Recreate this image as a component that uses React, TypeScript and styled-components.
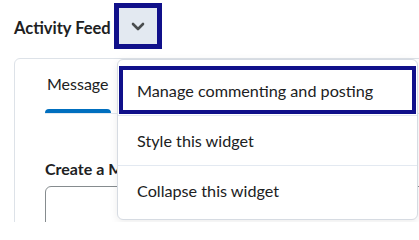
import React from "react";
import styled, { createGlobalStyle } from "styled-components";

const Global = createGlobalStyle`
  html, body { margin: 0; padding: 0; background: #ffffff; overflow: hidden; }
  body { font-family: Lato, "Noto Sans", sans-serif; color: #202122; }
`;

const Page = styled.div`
  position: relative;
  width: 419px;
  height: 222px;
  padding-left: 14px;
  box-sizing: border-box;
  overflow: hidden;
`;

const Header = styled.div`
  display: flex;
  align-items: center;
  height: 46px;
  padding-top: 3px;
`;

const Title = styled.h2`
  margin: 0;
  font-size: 16.5px;
  font-weight: 700;
  color: #202122;
  padding-top: 3px;
`;

const MenuButton = styled.button`
  display: flex;
  align-items: center;
  justify-content: center;
  width: 48px;
  height: 46px;
  margin-left: 3px;
  padding: 0;
  box-sizing: border-box;
  background: #e3e9f1;
  border: 5px solid #10108a;
  cursor: pointer;
`;

const Card = styled.div`
  margin-top: 9px;
  width: 460px;
  height: 200px;
  border: 1px solid #dde2e8;
  border-radius: 6px;
  box-sizing: border-box;
  padding-left: 30px;
`;

const TabBar = styled.div`
  display: flex;
  height: 54px;
  border-bottom: 1px solid #e3e9f1;
`;

const Tab = styled.div<{ $active?: boolean }>`
  position: relative;
  display: flex;
  align-items: center;
  padding: 0 2px 6px;
  font-size: 16px;
  color: #202122;
  &::after {
    content: "";
    display: ${(p) => (p.$active ? "block" : "none")};
    position: absolute;
    left: 0;
    right: 0;
    bottom: 0;
    height: 4px;
    border-radius: 4px 4px 0 0;
    background: #006fbf;
  }
`;

const Label = styled.div`
  margin-top: 45px;
  font-size: 16px;
  font-weight: 700;
  color: #202122;
  line-height: 20px;
`;

const TextArea = styled.div`
  margin-top: 7px;
  width: 380px;
  height: 80px;
  border: 1px solid #868c8f;
  border-radius: 6px;
`;

const Menu = styled.ul`
  position: absolute;
  left: 117px;
  top: 59px;
  width: 301px;
  margin: 0;
  padding: 5px 0 4px;
  list-style: none;
  box-sizing: border-box;
  background: #ffffff;
  border: 1px solid #d6dbe2;
  border-radius: 6px;
  box-shadow: 0 2px 8px rgba(0, 0, 0, 0.08);
`;

const MenuItem = styled.li<{ $focused?: boolean; $divider?: boolean }>`
  display: flex;
  align-items: center;
  height: 50px;
  padding: 0 19px;
  box-sizing: border-box;
  font-size: 16.2px;
  color: #202122;
  border-top: ${(p) => (p.$divider ? "1px solid #e3e9f1" : "none")};
  box-shadow: ${(p) =>
    p.$focused ? "inset 0 0 0 1px #ffffff, inset 0 0 0 5px #10108a" : "none"};
`;

const Chevron = () => (
  <svg width="14" height="9" viewBox="0 0 14 9" fill="none">
    <path
      d="M2 2L7 7L12 2"
      stroke="#494c4e"
      strokeWidth="2.6"
      strokeLinecap="round"
      strokeLinejoin="round"
    />
  </svg>
);

export default function App() {
  return (
    <Page>
      <Global />
      <Header>
        <Title>Activity Feed</Title>
        <MenuButton aria-label="Actions">
          <Chevron />
        </MenuButton>
      </Header>
      <Card>
        <TabBar>
          <Tab $active>Message</Tab>
        </TabBar>
        <Label>Create a Message</Label>
        <TextArea />
      </Card>
      <Menu>
        <MenuItem $focused>Manage commenting and posting</MenuItem>
        <MenuItem $divider>Style this widget</MenuItem>
        <MenuItem $divider>Collapse this widget</MenuItem>
      </Menu>
    </Page>
  );
}
